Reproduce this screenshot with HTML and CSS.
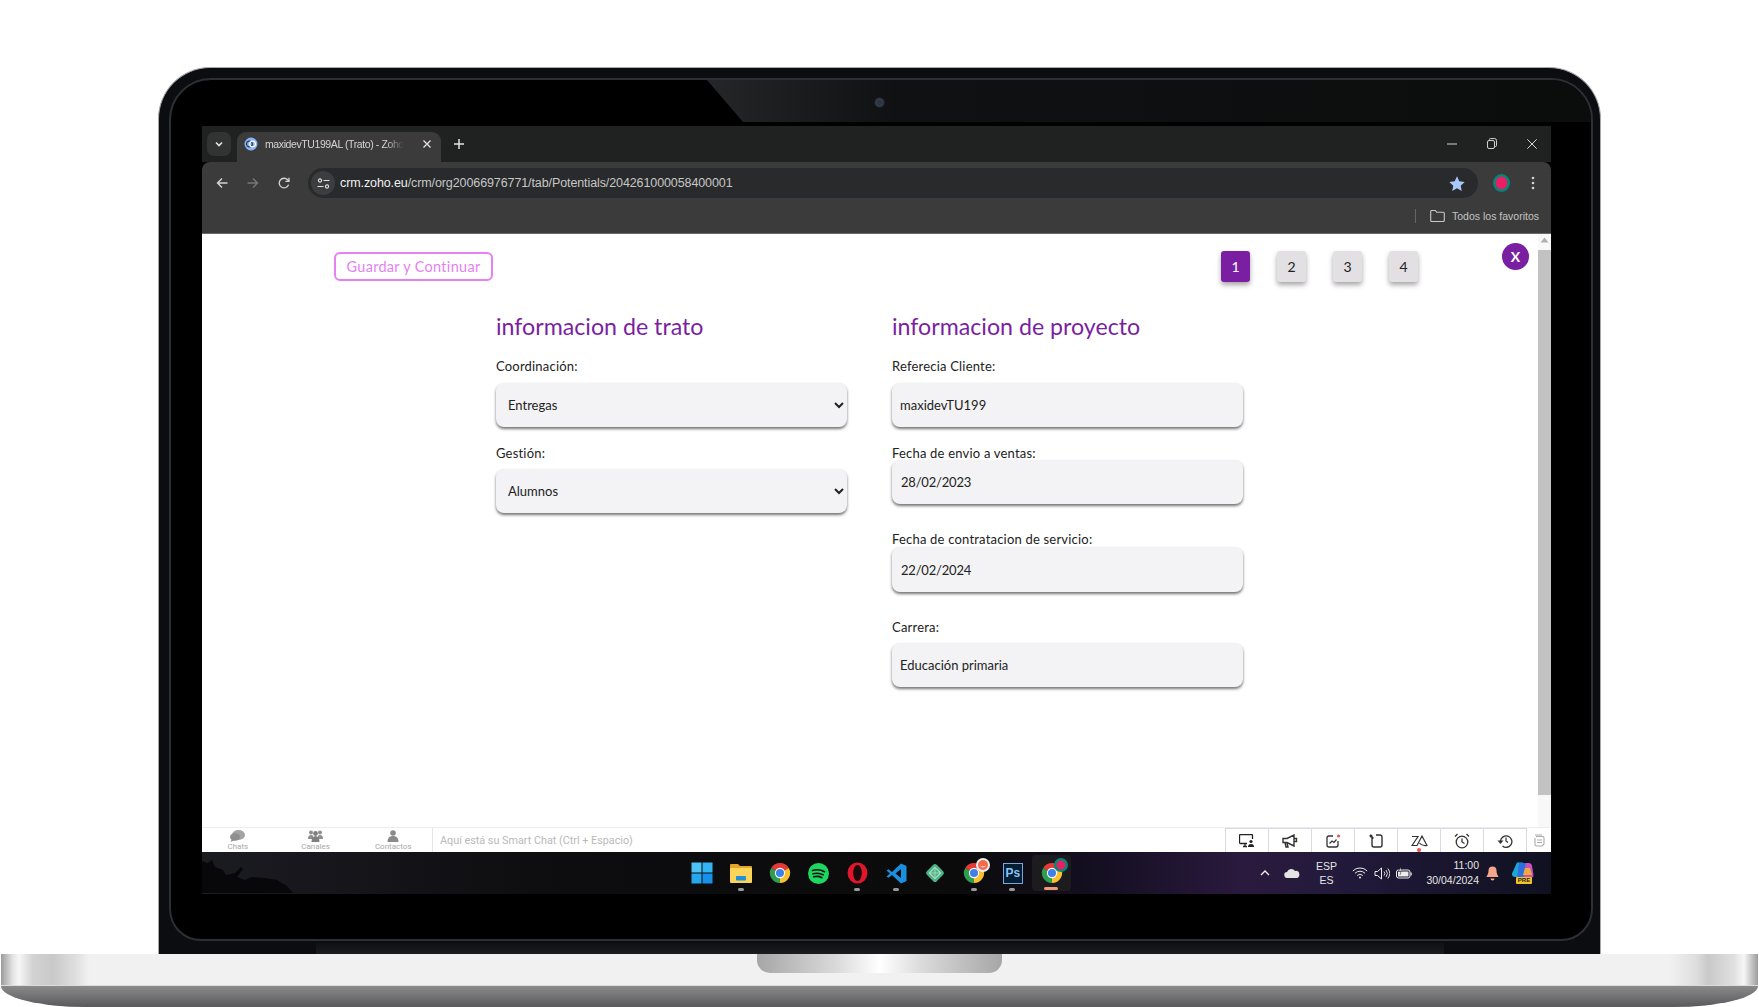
FILE: index.html
```html
<!DOCTYPE html>
<html lang="es">
<head>
    <meta charset="UTF-8">
    <meta name="viewport" content="width=device-width, initial-scale=1.0">
    <title>maxidevTU199AL (Trato) - Zoho CRM</title>
    <link rel="stylesheet" href="styles.css">
</head>
<body>
    <svg class="defs" width="0" height="0">
        <defs>
            <symbol id="chrome" viewBox="0 0 24 24">
                <path d="M12 12L2.47 6.5A11 11 0 0 1 21.53 6.5Z" fill="#e53935"/>
                <path d="M12 12L21.53 6.5A11 11 0 0 1 12 23Z" fill="#fbc02d"/>
                <path d="M12 12L12 23A11 11 0 0 1 2.47 6.5Z" fill="#2e9e4f"/>
                <circle cx="12" cy="12" r="5.6" fill="#fff"/>
                <circle cx="12" cy="12" r="4.4" fill="#3f7fe8"/>
            </symbol>
        </defs>
    </svg>

    <div class="lid">
        <div class="sheen"></div>
        <div class="camera"></div>
        <div class="hinge"></div>

        <div class="screen">
            <div class="tabstrip">
                <div class="tab-search">
                    <svg width="10" height="10" viewBox="0 0 10 10"><path d="M2 3.5l3 3 3-3" fill="none" stroke="#e3e3e3" stroke-width="1.6"/></svg>
                </div>
                <div class="tab">
                    <svg class="favicon" width="14" height="14" viewBox="0 0 14 14">
                        <circle cx="7" cy="7" r="6.500" fill="#8ab4f8"/>
                        <circle cx="5.400" cy="7" r="2.900" fill="none" stroke="#2b3a55" stroke-width="1.200"/>
                        <circle cx="8.600" cy="7" r="2.900" fill="none" stroke="#fff" stroke-width="1.200"/>
                    </svg>
                    <span class="tab-title">maxidevTU199AL (Trato) - Zoho</span>
                    <svg width="10" height="10" viewBox="0 0 10 10"><path d="M1.500 1.500l7 7M8.500 1.500l-7 7" stroke="#e3e3e3" stroke-width="1.300"/></svg>
                </div>
                <svg class="new-tab" width="12" height="12" viewBox="0 0 12 12"><path d="M6 1v10M1 6h10" stroke="#e3e3e3" stroke-width="1.500"/></svg>
                <div class="win-controls">
                    <svg width="10" height="10" viewBox="0 0 10 10"><path d="M0 5h10" stroke="#d0d0d0"/></svg>
                    <svg width="10" height="11" viewBox="0 0 10 11"><rect x="0.500" y="2.500" width="7" height="8" rx="1.500" fill="none" stroke="#d0d0d0"/><path d="M2.500 2.500V1.500a1 1 0 0 1 1-1h4a2 2 0 0 1 2 2v5a1 1 0 0 1-1 1h-1" fill="none" stroke="#d0d0d0"/></svg>
                    <svg width="10" height="10" viewBox="0 0 10 10"><path d="M0.300 0.300l9.400 9.400M9.700 0.300L0.300 9.700" stroke="#d8d8d8"/></svg>
                </div>
            </div>

            <div class="toolbar">
                <div class="nav-row">
                    <div class="nav-btns">
                        <svg width="12" height="12" viewBox="0 0 12 12"><path d="M11.500 6H1.500M6 1.500L1.500 6 6 10.500" fill="none" stroke="#d4d4d4" stroke-width="1.400"/></svg>
                        <svg width="12" height="12" viewBox="0 0 12 12"><path d="M0.500 6h10M6 1.500L10.500 6 6 10.500" fill="none" stroke="#777" stroke-width="1.400"/></svg>
                        <svg width="12" height="12" viewBox="0 0 12 12"><path d="M10.600 7.600A4.800 4.800 0 1 1 9.600 2.800L11 4.200M11 0.800V4.400H7.400" fill="none" stroke="#d4d4d4" stroke-width="1.300"/></svg>
                    </div>
                    <div class="omnibox">
                        <div class="site-chip">
                            <svg width="13" height="11" viewBox="0 0 13 11"><circle cx="3" cy="2.500" r="1.600" fill="none" stroke="#e3e3e3" stroke-width="1.100"/><path d="M6.500 2.500H12.500M0.500 8.500H6.500" stroke="#e3e3e3" stroke-width="1.200"/><circle cx="10" cy="8.500" r="1.600" fill="none" stroke="#e3e3e3" stroke-width="1.100"/></svg>
                        </div>
                        <span class="url"><b>crm.zoho.eu</b>/crm/org20066976771/tab/Potentials/204261000058400001</span>
                        <svg class="star" width="16" height="15" viewBox="0 0 24 23"><path d="M12 0.500l3.500 7.600 8.300 1-6.100 5.700 1.600 8.200L12 18.900 4.700 23l1.600-8.200L0.200 9.100l8.300-1z" fill="#a8c7fa"/></svg>
                    </div>
                    <svg class="avatar" width="17" height="18" viewBox="0 0 17 18"><ellipse cx="8.500" cy="9" rx="8.500" ry="9" fill="#00897b"/><ellipse cx="8.500" cy="9" rx="6" ry="6.400" fill="#e91e63"/></svg>
                    <svg class="menu-dots" width="4" height="14" viewBox="0 0 4 14"><circle cx="2" cy="2" r="1.300" fill="#d4d4d4"/><circle cx="2" cy="7" r="1.300" fill="#d4d4d4"/><circle cx="2" cy="12" r="1.300" fill="#d4d4d4"/></svg>
                </div>
                <div class="bookmarks">
                    <span class="bm-sep"></span>
                    <svg width="15" height="12" viewBox="0 0 15 12"><path d="M0.700 1.500a1 1 0 0 1 1-1h3.600l1.500 1.700h6.500a1 1 0 0 1 1 1v7.300a1 1 0 0 1-1 1H1.700a1 1 0 0 1-1-1z" fill="none" stroke="#c7c7c7" stroke-width="1.100"/></svg>
                    <span>Todos los favoritos</span>
                </div>
            </div>

            <div class="page">
                <div class="content">
                    <div class="top-row">
                        <button class="save-btn">Guardar y Continuar</button>
                        <div class="steps">
                            <button class="step active">1</button>
                            <button class="step">2</button>
                            <button class="step">3</button>
                            <button class="step">4</button>
                        </div>
                    </div>
                    <button class="close-btn">X</button>

                    <div class="form">
                        <div class="col">
                            <h2>informacion de trato</h2>
                            <label>Coordinación:</label>
                            <select class="control gap-9"><option>Entregas</option></select>
                            <label class="mt-18">Gestión:</label>
                            <select class="control gap-8"><option>Alumnos</option></select>
                        </div>
                        <div class="col">
                            <h2>informacion de proyecto</h2>
                            <label>Referecia Cliente:</label>
                            <input class="control text-input gap-9" type="text" value="maxidevTU199">
                            <label class="mt-18">Fecha de envio a ventas:</label>
                            <input class="control date-input overlap" type="text" value="28/02/2023">
                            <label class="mt-27">Fecha de contratacion de servicio:</label>
                            <input class="control date-input tall" type="text" value="22/02/2024">
                            <label class="mt-27">Carrera:</label>
                            <input class="control text-input gap-8" type="text" value="Educación primaria">
                        </div>
                    </div>
                </div>
                <div class="scrollbar">
                    <svg width="9" height="6" viewBox="0 0 9 6"><path d="M4.500 0.500L8.500 5.500H0.500z" fill="#b0b0b0"/></svg>
                    <div class="thumb"></div>
                </div>
            </div>

            <div class="chatbar">
                <div class="chat-tabs">
                    <div class="chat-tab">
                        <svg width="15" height="12" viewBox="0 0 15 12"><ellipse cx="8.500" cy="5" rx="6.500" ry="5" fill="#a3a3a3"/><ellipse cx="5" cy="7" rx="5" ry="3.800" fill="#8f8f8f"/><path d="M2 9l-1.500 3L5 10z" fill="#8f8f8f"/></svg>
                        <span>Chats</span>
                    </div>
                    <div class="chat-tab">
                        <svg width="15" height="12" viewBox="0 0 15 12"><circle cx="3" cy="2.500" r="2" fill="#8f8f8f"/><circle cx="12" cy="2.500" r="2" fill="#8f8f8f"/><circle cx="7.500" cy="3.500" r="2.400" fill="#7f7f7f"/><path d="M0 9c0-3 1-4 3-4s2 1 2 1v3zM15 9c0-3-1-4-3-4s-2 1-2 1v3z" fill="#8f8f8f"/><path d="M3.500 12c0-4 1.500-6 4-6s4 2 4 6z" fill="#7f7f7f"/></svg>
                        <span>Canales</span>
                    </div>
                    <div class="chat-tab">
                        <svg width="12" height="12" viewBox="0 0 12 12"><circle cx="6" cy="3" r="2.800" fill="#8a8a8a"/><path d="M0.500 12c0-4 2-6 5.500-6s5.500 2 5.500 6z" fill="#8a8a8a"/></svg>
                        <span>Contactos</span>
                    </div>
                </div>
                <div class="smart-chat">Aquí está su Smart Chat (Ctrl + Espacio)</div>
                <div class="chat-tools">
                    <div class="chat-tool">
                        <svg width="16" height="14" viewBox="0 0 16 14"><path d="M8 9.500H1.500a1 1 0 0 1-1-1v-7a1 1 0 0 1 1-1h11a1 1 0 0 1 1 1V5M4 12.500h4M6 9.500v3" fill="none" stroke="#222" stroke-width="1.300"/><circle cx="12" cy="7.500" r="1.600" fill="#222"/><path d="M9 13c0-2 1-3 3-3s3 1 3 3z" fill="#222"/></svg>
                    </div>
                    <div class="chat-tool">
                        <svg width="16" height="14" viewBox="0 0 16 14"><path d="M1 4.500h4L12 1v11L5 8.500H1zM12 4.500h2.500v3H12M3 8.500l1 4.500h2l-1-4" fill="none" stroke="#333" stroke-width="1.400"/></svg>
                    </div>
                    <div class="chat-tool">
                        <svg width="15" height="14" viewBox="0 0 15 14"><path d="M7 2H3a2 2 0 0 0-2 2v7a2 2 0 0 0 2 2h7a2 2 0 0 0 2-2V7" fill="none" stroke="#333" stroke-width="1.300"/><path d="M3.500 9.500L6 7l2 1.500L10.500 5.500" fill="none" stroke="#333" stroke-width="1.200"/><circle cx="12.500" cy="2" r="1.500" fill="#e5504a"/></svg>
                    </div>
                    <div class="chat-tool">
                        <svg width="14" height="14" viewBox="0 0 14 14"><path d="M3 3v8a2 2 0 0 0 2 2h6a2 2 0 0 0 2-2V3a2 2 0 0 0-2-2H7M1 1l3.500 3.500" fill="none" stroke="#333" stroke-width="1.400"/><circle cx="2" cy="2" r="1.500" fill="#333"/></svg>
                    </div>
                    <div class="chat-tool">
                        <svg width="17" height="12" viewBox="0 0 17 12"><path d="M1 1.500h6L1 10.500h5L11 1l5 9.500c-2.500 0.500-6-0.500-7.500-2.500" fill="none" stroke="#333" stroke-width="1.200"/></svg>
                        <span class="zia-dot"></span>
                    </div>
                    <div class="chat-tool">
                        <svg width="16" height="16" viewBox="0 0 16 16"><circle cx="8" cy="9" r="5.800" fill="none" stroke="#333" stroke-width="1.300"/><path d="M8 5.500V9l2.500 1.500M1 3.500L3.500 1M15 3.500L12.500 1" fill="none" stroke="#333" stroke-width="1.300"/></svg>
                    </div>
                    <div class="chat-tool">
                        <svg width="16" height="14" viewBox="0 0 16 14"><path d="M3.500 7a5.700 5.700 0 1 1 2 5" fill="none" stroke="#333" stroke-width="1.300"/><path d="M9 3.500V7l2 1.500" fill="none" stroke="#333" stroke-width="1.200"/><path d="M0.500 6.500h6L3.500 10z" fill="#333"/></svg>
                    </div>
                    <div class="chat-end">
                        <svg width="12" height="13" viewBox="0 0 12 13"><path d="M3 2.500h6.500a1.500 1.500 0 0 1 1.500 1.500v6l-2 2H3.500A1.500 1.500 0 0 1 2 10.500V4M4 6h5M4 8.500h5M2 1h7" fill="none" stroke="#aaa" stroke-width="1.100"/></svg>
                    </div>
                </div>
            </div>

            <div class="taskbar">
                <svg class="wall-tree" width="130" height="41" viewBox="0 0 130 41"><path d="M0 9l6 2 4-3 3 7 8 3 3 5 9-2 6-6 2 2-6 8 8 3 6-3 14 1 12 2 10 6 7 8H0z" fill="#08080a"/></svg>
                <div class="task-icons">
                    <div class="task-icon">
                        <svg width="22" height="22" viewBox="0 0 22 22"><rect x="0.500" y="0.500" width="10" height="10" fill="#4cc2f5"/><rect x="11.500" y="0.500" width="10" height="10" fill="#34b4f2"/><rect x="0.500" y="11.500" width="10" height="10" fill="#25a6ef"/><rect x="11.500" y="11.500" width="10" height="10" fill="#1690e8"/></svg>
                    </div>
                    <div class="task-icon running">
                        <svg width="22" height="20" viewBox="0 0 22 20"><path d="M0 2a1 1 0 0 1 1-1h7l2 2h11a1 1 0 0 1 1 1v3H0z" fill="#e5a526"/><rect y="5" width="22" height="15" rx="1" fill="#fdd45a"/><rect x="6" y="13" width="10" height="4.500" rx="0.800" fill="#1e8fd8"/></svg>
                    </div>
                    <div class="task-icon">
                        <svg width="22" height="22"><use href="#chrome"/></svg>
                    </div>
                    <div class="task-icon">
                        <svg width="21" height="21" viewBox="0 0 21 21"><circle cx="10.500" cy="10.500" r="10.500" fill="#1ed760"/><path d="M4.500 7.500c4-1.200 8.500-0.800 12 1.200M5 10.800c3.500-1 7.200-0.600 10.300 1.100M5.700 13.800c2.800-0.800 5.800-0.500 8.200 0.900" fill="none" stroke="#111" stroke-width="1.600" stroke-linecap="round"/></svg>
                    </div>
                    <div class="task-icon running">
                        <svg width="21" height="22" viewBox="0 0 21 22"><ellipse cx="10.500" cy="11" rx="10" ry="10.500" fill="#e0162b"/><ellipse cx="10.500" cy="11" rx="4.300" ry="8" fill="#1a0a0c"/></svg>
                    </div>
                    <div class="task-icon running">
                        <svg width="21" height="21" viewBox="0 0 21 21"><path d="M15 0.500L20.500 3v15L15 20.500 6 12l-3.500 2.800L0.500 13.500 4 10.500 0.500 7.500l2-1.300L6 9z" fill="#1a8fe0"/><path d="M15 6L9.500 10.500 15 15z" fill="#0b0b0d"/></svg>
                    </div>
                    <div class="task-icon">
                        <svg width="22" height="22" viewBox="0 0 22 22"><rect x="4" y="4" width="14" height="14" rx="2.500" transform="rotate(45 11 11)" fill="#4fb286"/><rect x="7" y="7" width="8" height="8" transform="rotate(45 11 11)" fill="none" stroke="#b8e6cf" stroke-width="1"/><path d="M11 6v10M6 11h10" stroke="#b8e6cf" stroke-width="0.700"/></svg>
                    </div>
                    <div class="task-icon running">
                        <svg width="22" height="22"><use href="#chrome"/></svg>
                        <svg class="badge" width="14" height="14" viewBox="0 0 14 14"><circle cx="7" cy="7" r="7" fill="#eee"/><circle cx="7" cy="7" r="5" fill="#f4694a"/><path d="M4.500 8c1 1.200 4 1.200 5 0" fill="none" stroke="#fff" stroke-width="0.800"/></svg>
                    </div>
                    <div class="task-icon running">
                        <div class="ps-logo">Ps</div>
                    </div>
                    <div class="task-icon current">
                        <svg width="22" height="22"><use href="#chrome"/></svg>
                        <svg class="badge" width="14" height="14" viewBox="0 0 14 14"><circle cx="7" cy="7" r="7" fill="#00897b"/><circle cx="7" cy="7" r="4.500" fill="#e91e63"/></svg>
                    </div>
                </div>

                <div class="tray">
                    <svg width="10" height="6" viewBox="0 0 10 6"><path d="M1 5l4-4 4 4" fill="none" stroke="#f2f2f2" stroke-width="1.300"/></svg>
                    <svg width="16" height="10" viewBox="0 0 16 10"><path d="M3.500 10a3 3 0 0 1-0.500-6A4.500 4.500 0 0 1 11 3a3.500 3.500 0 0 1 1.500 7z" fill="#e4e4e4"/></svg>
                    <div class="lang"><span>ESP</span><span>ES</span></div>
                    <div class="net">
                        <svg width="16" height="12" viewBox="0 0 16 12"><path d="M0.800 4a10 10 0 0 1 14.400 0M3 6.300a7 7 0 0 1 10 0M5.200 8.500a4 4 0 0 1 5.600 0" fill="none" stroke="#ececec" stroke-width="1"/><circle cx="8" cy="10.500" r="1" fill="#ececec"/></svg>
                        <svg width="16" height="13" viewBox="0 0 16 13"><path d="M1 4.500h2.500L7.500 1v11L3.500 8.500H1z" fill="none" stroke="#ececec" stroke-width="1"/><path d="M10 4.500a3 3 0 0 1 0 4M12 3a5.500 5.500 0 0 1 0 7M13.800 1.500a8 8 0 0 1 0 10" fill="none" stroke="#ececec" stroke-width="0.900"/></svg>
                        <svg width="16" height="12" viewBox="0 0 16 12"><rect x="0.500" y="3" width="13.500" height="8" rx="2" fill="none" stroke="#ececec"/><rect x="2" y="4.500" width="10.500" height="5" fill="#ececec"/><rect x="14.500" y="5.500" width="1.200" height="3" fill="#ececec"/><path d="M5 0L2.500 4.500H5L4 8" fill="#ececec" stroke="#111" stroke-width="0.500"/></svg>
                    </div>
                    <div class="clock-area">
                        <div class="clock"><span>11:00</span><span>30/04/2024</span></div>
                        <svg class="bell" width="13" height="15" viewBox="0 0 13 15"><path d="M6.500 0.500a4 4 0 0 1 4 4c0 4 2 5.500 2 6.500H0.500c0-1 2-2.500 2-6.500a4 4 0 0 1 4-4z" fill="#f4a58a"/><path d="M4.500 12.500h4a2 2 0 0 1-4 0z" fill="#f4a58a"/></svg>
                        <div class="copilot">
                            <svg width="22" height="17" viewBox="0 0 22 17"><path d="M5 0.500h6L7 15H3a3 3 0 0 1-3-3.500z" fill="#1aa7d8"/><path d="M7 1h8l-3 15H5z" fill="#2b6fe0"/><path d="M14 1h3a3 3 0 0 1 3 2.500L21.500 13a3 3 0 0 1-3 3H11z" fill="#c850c0"/><path d="M13 6h5l2 7h-9z" fill="#f0a93a"/></svg>
                            <span>PRE</span>
                        </div>
                    </div>
                </div>
            </div>
        </div>
    </div>

    <div class="base">
        <div class="base-top"><div class="notch"></div></div>
        <div class="base-bottom"></div>
    </div>
</body>
</html>
```

FILE: styles.css
```css
* {
    box-sizing: border-box;
}

body {
    margin: 0;
    padding-top: 67px;
    background-color: #fff;
    font-family: "Noto Sans", sans-serif;
    overflow: hidden;
}

.defs {
    position: absolute;
}

/* laptop */
.lid {
    position: relative;
    width: 1443px;
    height: 887px;
    margin-left: 158px;
    padding: 58px 49px 0 43px;
    background-color: #0b0d10;
    border: 1px solid #a8a8a8;
    border-bottom: none;
    border-radius: 52px 52px 0 0;
}

.lid::before {
    content: "";
    position: absolute;
    top: 10px;
    left: 10px;
    right: 7px;
    bottom: 13px;
    background-color: #000;
    border: 2px solid #2b3034;
    border-radius: 42px 42px 32px 32px;
}

.sheen {
    position: absolute;
    top: 12px;
    left: 538px;
    right: 9px;
    height: 42px;
    background: linear-gradient(to right, #262728, #101112 22%, #0b0c0c);
    border-radius: 0 40px 0 0;
    clip-path: polygon(10px 0, 100% 0, 100% 100%, 46px 100%);
}

.camera {
    position: absolute;
    top: 29px;
    left: 715px;
    width: 11px;
    height: 11px;
    background: radial-gradient(circle, #26344f 25%, #3b3f45 45%, #15171a 70%);
    border-radius: 50%;
}

.hinge {
    position: absolute;
    left: 157px;
    right: 156px;
    bottom: 0;
    height: 11px;
    background: linear-gradient(#0f1114, #1a1c1f);
}

.screen {
    position: relative;
    width: 1349px;
    height: 768px;
    display: flex;
    flex-direction: column;
    overflow: hidden;
}

.base {
    margin-left: 1px;
    width: 1757px;
}

.base-top {
    position: relative;
    height: 32px;
    border-bottom: 1px solid #dcdcdc;
    background: linear-gradient(to right, #9c9c9c 0, #e4e4e4 12px, #f6f6f6 18px, #d2d2d2 32px, #c9c9c9 52px, #dedede 74px, #f0f1f0 88px, #f0f1f0 calc(100% - 88px), #dedede calc(100% - 62px), #c9c9c9 calc(100% - 50px), #e0e0e0 calc(100% - 24px), #f6f6f6 calc(100% - 14px), #9c9c9c 100%);
}

.notch {
    position: absolute;
    top: 0;
    left: 756px;
    width: 245px;
    height: 19px;
    border-radius: 0 0 13px 13px;
    background: linear-gradient(to right, #a6a6a6, #d8d9d8 32%, #fff 50%, #d8d9d8 68%, #a6a6a6);
}

.base-bottom {
    height: 21px;
    background: linear-gradient(#8a8a8b, #59595b);
    border-radius: 0 0 85px 85px / 0 0 21px 21px;
}

/* browser */
.tabstrip {
    display: flex;
    align-items: flex-end;
    height: 36px;
    padding-left: 5px;
    background-color: #202222;
}

.tab-search {
    width: 24px;
    height: 24px;
    margin-bottom: 6px;
    display: flex;
    align-items: center;
    justify-content: center;
    background-color: #323434;
    border-radius: 7px;
}

.tab {
    width: 204px;
    height: 30px;
    margin-left: 6px;
    padding: 0 9px 6px 7px;
    display: flex;
    align-items: center;
    background-color: #3b3b3b;
    border-radius: 9px 9px 0 0;
}

.favicon {
    flex-shrink: 0;
}

.tab-title {
    width: 151px;
    margin-left: 7px;
    margin-right: 6px;
    font-family: "Liberation Sans", sans-serif;
    font-size: 10.500px;
    letter-spacing: -0.4px;
    color: #d4d4d4;
    white-space: nowrap;
    overflow: hidden;
    -webkit-mask-image: linear-gradient(to right, #000 80%, transparent 92%);
    mask-image: linear-gradient(to right, #000 80%, transparent 92%);
}

.new-tab {
    margin-left: 12px;
    margin-bottom: 12px;
}

.win-controls {
    margin-left: auto;
    margin-bottom: 13px;
    padding-right: 14px;
    display: flex;
    align-items: center;
    gap: 30px;
}

.toolbar {
    height: 72px;
    padding-top: 6px;
    background-color: #3b3b3b;
    border-bottom: 1px solid #6a6a6a;
    border-radius: 8px 8px 0 0;
}

.nav-row {
    height: 30px;
    display: flex;
    align-items: center;
}

.nav-btns {
    width: 106px;
    padding-left: 14px;
    display: flex;
    gap: 19px;
}

.omnibox {
    width: 1170px;
    height: 30px;
    padding-left: 3px;
    padding-right: 13px;
    display: flex;
    align-items: center;
    background-color: #282a2b;
    border-radius: 15px;
}

.site-chip {
    width: 24px;
    height: 24px;
    display: flex;
    align-items: center;
    justify-content: center;
    background-color: #3b3d3e;
    border-radius: 50%;
}

.url {
    margin-left: 5px;
    font-family: "Liberation Sans", sans-serif;
    font-size: 12.500px;
    letter-spacing: -0.1px;
    color: #c7c7c7;
    white-space: nowrap;
}

.url b {
    font-weight: 400;
    color: #f1f1f1;
}

.star {
    margin-left: auto;
}

.avatar {
    margin-left: 15px;
}

.menu-dots {
    margin-left: 21px;
}

.bookmarks {
    height: 35px;
    padding-right: 12px;
    display: flex;
    align-items: center;
    justify-content: flex-end;
    font-family: "Liberation Sans", sans-serif;
    font-size: 10.500px;
    color: #c4c4c4;
}

.bm-sep {
    width: 1px;
    height: 14px;
    margin-right: 14px;
    background-color: #666;
}

.bookmarks svg {
    margin-right: 7px;
}

/* page */
.page {
    height: 593px;
    display: flex;
    background-color: #fff;
    font-family: Lato, sans-serif;
}

.content {
    position: relative;
    flex: 1;
}

.top-row {
    height: 48px;
    padding-top: 17px;
    padding-left: 132px;
    display: flex;
    align-items: flex-start;
}

.save-btn {
    width: 159px;
    height: 29px;
    margin-top: 1px;
    padding: 0;
    font-family: inherit;
    font-size: 14.500px;
    letter-spacing: 0.3px;
    color: #e77ff5;
    background-color: #fff;
    border: 2px solid #e77ff5;
    border-radius: 6px;
}

.steps {
    margin-left: 728px;
    display: flex;
    gap: 27px;
}

.step {
    width: 29px;
    height: 31px;
    padding: 0;
    font-family: inherit;
    font-size: 14px;
    font-weight: 400;
    color: #222;
    background-color: #e2e0e3;
    border: none;
    border-radius: 3px;
    box-shadow: 0 3px 5px rgba(0, 0, 0, 0.35);
}

.step.active {
    color: #fff;
    background-color: #7b1fa2;
}

.close-btn {
    position: absolute;
    top: 9px;
    left: 1300px;
    width: 27px;
    height: 27px;
    padding: 0;
    font-family: inherit;
    font-size: 14px;
    font-weight: 700;
    color: #fff;
    background-color: #7b1fa2;
    border: none;
    border-radius: 50%;
}

.form {
    margin-left: 294px;
    margin-top: 30px;
    display: flex;
    gap: 45px;
}

.col {
    width: 351px;
    display: flex;
    flex-direction: column;
}

h2 {
    height: 28px;
    margin: 0 0 18px;
    font-size: 23.200px;
    line-height: 28px;
    font-weight: 400;
    color: #7b1fa2;
}

label {
    height: 16px;
    font-size: 13px;
    line-height: 16px;
    letter-spacing: 0.2px;
    color: #222;
}

.control {
    flex-shrink: 0;
    width: 100%;
    height: 44px;
    font-family: inherit;
    font-size: 13px;
    color: #222;
    background-color: #f3f3f5;
    border: none;
    border-radius: 8px;
    box-shadow: 0 2px 3px rgba(0, 0, 0, 0.55);
}

select.control {
    padding-left: 8px;
}

.text-input {
    padding-left: 8px;
}

.date-input {
    padding-left: 9px;
    letter-spacing: -0.2px;
}

.tall {
    height: 45px;
}

.overlap {
    margin-top: -1px;
}

.gap-9 {
    margin-top: 9px;
}

.gap-8 {
    margin-top: 8px;
}

.mt-18 {
    margin-top: 18px;
}

.mt-27 {
    margin-top: 27px;
}

.scrollbar {
    width: 13px;
    padding-top: 3px;
    display: flex;
    flex-direction: column;
    align-items: center;
    background-color: #f8f8f8;
}

.thumb {
    width: 100%;
    height: 545px;
    margin-top: 7px;
    background-color: #c2c2c2;
}

/* zoho chat bar */
.chatbar {
    height: 25px;
    display: flex;
    background-color: #fff;
    border-top: 1px solid #ececec;
    font-family: Roboto, sans-serif;
    overflow: hidden;
}

.chat-tabs {
    width: 233px;
    margin-left: -3px;
    display: flex;
    flex-shrink: 0;
}

.chat-tab {
    width: 78px;
    padding-top: 2px;
    display: flex;
    flex-direction: column;
    align-items: center;
    font-size: 8px;
    line-height: 9px;
    color: #a8a8a8;
}

.smart-chat {
    flex: 1;
    padding-left: 7px;
    font-size: 10.800px;
    line-height: 25px;
    color: #b9b9b9;
    border-left: 1px solid #e6e6e6;
}

.chat-tools {
    display: flex;
    height: 24px;
}

.chat-tool {
    position: relative;
    width: 43px;
    display: flex;
    align-items: center;
    justify-content: center;
    border-left: 1px solid #d8dce2;
    border-top: 1px solid #d8dce2;
}

.chat-end {
    width: 25px;
    display: flex;
    align-items: center;
    justify-content: center;
    border-left: 1px solid #d8dce2;
}

.zia-dot {
    position: absolute;
    bottom: 0;
    left: 19px;
    width: 4px;
    height: 4px;
    background-color: #ef5350;
    border-radius: 50%;
}

/* windows taskbar */
.taskbar {
    position: relative;
    height: 42px;
    display: flex;
    align-items: center;
    padding-right: 15px;
    background: linear-gradient(to right, #1b1b22 0, #17171d 100px, #0d0d0f 360px, #0b0b0c 760px, #150f22 900px, #2a1a3e 1040px, #231a3c 1130px, #0f1120 1349px);
}

.wall-tree {
    position: absolute;
    left: 0;
    top: 0;
}

.task-icons {
    position: relative;
    margin-left: 481px;
    display: flex;
}

.task-icon {
    position: relative;
    width: 38.800px;
    height: 36px;
    display: flex;
    align-items: center;
    justify-content: center;
}

.task-icon.running::after {
    content: "";
    position: absolute;
    left: 16px;
    bottom: 0;
    width: 6px;
    height: 3px;
    background-color: #9a9a9a;
    border-radius: 2px;
}

.task-icon.current {
    background-color: #1c1c1f;
    border-radius: 4px;
}

.task-icon.current::after {
    content: "";
    position: absolute;
    left: 12px;
    bottom: 1px;
    width: 14px;
    height: 3px;
    background-color: #f4997c;
    border-radius: 2px;
}

.badge {
    position: absolute;
    top: 3px;
    right: 3px;
}

.ps-logo {
    width: 20px;
    height: 21px;
    font-family: "Liberation Sans", sans-serif;
    font-size: 12px;
    font-weight: 700;
    line-height: 19px;
    text-align: center;
    color: #8bc3f5;
    background-color: #001e36;
    border: 1px solid #7fa6d9;
}

.tray {
    position: relative;
    margin-left: auto;
    display: flex;
    align-items: center;
    gap: 14px;
}

.lang {
    width: 24px;
    display: flex;
    flex-direction: column;
    align-items: center;
    font-family: "Liberation Sans", sans-serif;
    font-size: 10.500px;
    line-height: 14px;
    color: #e6e6e6;
}

.net {
    display: flex;
    align-items: center;
    gap: 6px;
}

.clock-area {
    display: flex;
    align-items: center;
}

.clock {
    display: flex;
    flex-direction: column;
    align-items: flex-end;
    font-family: "Liberation Sans", sans-serif;
    font-size: 10.500px;
    line-height: 15px;
    color: #e6e6e6;
}

.bell {
    margin-left: 7px;
}

.copilot {
    position: relative;
    width: 24px;
    height: 22px;
    margin-left: 13px;
}

.copilot span {
    position: absolute;
    bottom: 0;
    left: 4px;
    width: 16px;
    height: 7px;
    font-family: "Liberation Sans", sans-serif;
    font-size: 6px;
    font-weight: 700;
    line-height: 7px;
    text-align: center;
    color: #222;
    background-color: #f7c325;
    border-radius: 1px;
}
```
